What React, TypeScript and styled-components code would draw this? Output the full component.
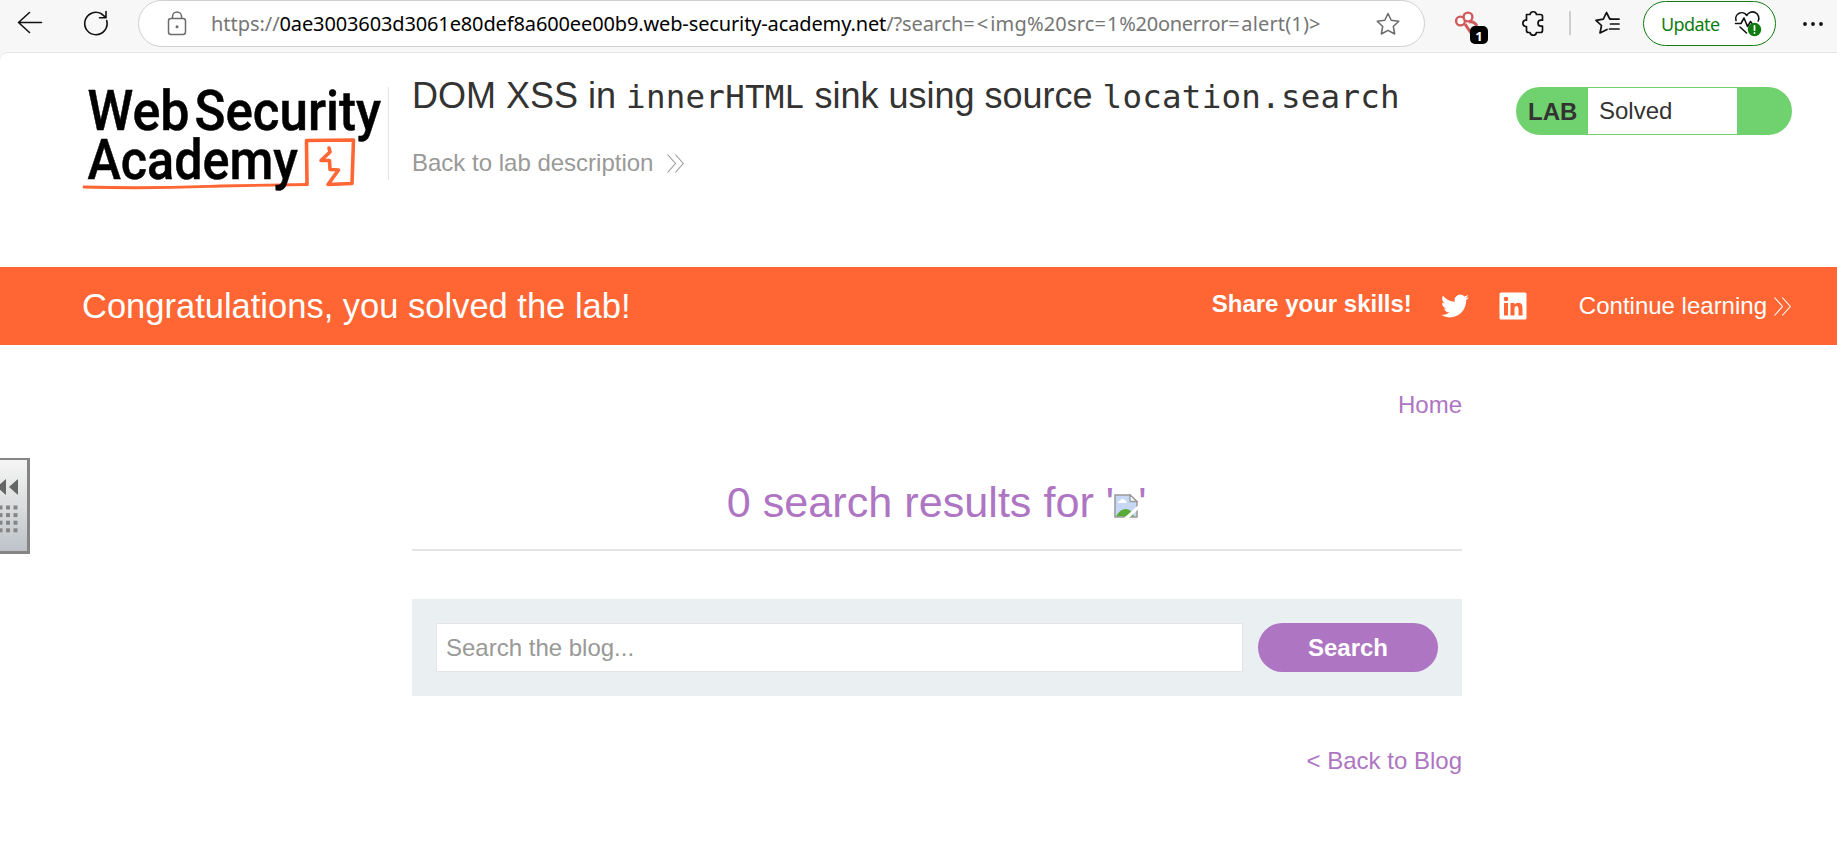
import React from "react";
import styled, { createGlobalStyle } from "styled-components";

const GlobalStyle = createGlobalStyle`
  * { box-sizing: border-box; }
  body {
    margin: 0;
    background: #fff;
    color: #333332;
    font-family: "Liberation Sans", Arial, sans-serif;
    font-size: 24px;
    line-height: 28px;
    overflow: hidden;
  }
  a { color: inherit; text-decoration: none; }
  svg { display: block; flex: none; overflow: visible; }
`;

const Page = styled.div`
  position: relative;
  width: 1837px;
  height: 864px;
  background: #f7f7f7;
`;

const Toolbar = styled.header`
  height: 52px;
  display: flex;
  align-items: flex-start;
  font-family: "Noto Sans", "Open Sans", sans-serif;
`;

const NavIcons = styled.div`
  width: 138px;
  height: 46px;
  padding-left: 16px;
  display: flex;
  align-items: center;
  gap: 38px;
`;

const AddressBar = styled.div`
  width: 1287px;
  height: 47px;
  padding: 0 24px 0 28px;
  display: flex;
  align-items: center;
  border: 1.5px solid #d0d0d0;
  border-radius: 24px;
  background: #fff;
`;

const Url = styled.div`
  flex: 1;
  margin-left: 24px;
  padding-top: 1px;
  font-size: 20px;
  line-height: 28px;
  white-space: nowrap;
  color: #767676;
`;

const UrlPart = styled.span<{ $spacing: number; $strong?: boolean }>`
  letter-spacing: ${(p) => p.$spacing}px;
  color: ${(p) => (p.$strong ? "#000" : "#767676")};
`;

const ToolbarIcons = styled.div`
  height: 46px;
  flex: 1;
  padding-left: 28px;
  display: flex;
  align-items: center;
`;

const ExtensionIcon = styled.div`
  position: relative;
  width: 34px;
  height: 46px;
`;

const ExtensionBadge = styled.span`
  position: absolute;
  left: 17px;
  top: 26px;
  width: 18px;
  height: 18px;
  border-radius: 5px;
  background: #000;
  color: #fff;
  font: 700 13px/20px "Noto Sans", sans-serif;
  text-align: center;
`;

const Spacer = styled.span<{ $w: number }>`
  flex: none;
  width: ${(p) => p.$w}px;
`;

const Separator = styled.span`
  width: 2px;
  height: 24px;
  background: #cfcfcf;
`;

const UpdateButton = styled.button`
  width: 133px;
  height: 45px;
  margin-top: 1px;
  padding: 0 15px 0 17px;
  display: flex;
  align-items: center;
  justify-content: space-between;
  border: 1.5px solid #107c10;
  border-radius: 23px;
  background: #fff;
  color: #107c10;
  font: 18px/24px "Noto Sans", sans-serif;
  letter-spacing: -0.6px;
`;

const Content = styled.main`
  height: 812px;
  border-top: 1px solid #e6e6e6;
  border-top-left-radius: 8px;
  background: #fff;
`;

const LabHeader = styled.section`
  height: 214px;
  padding: 34px 45px 0 82px;
  display: flex;
  align-items: flex-start;
`;

const LogoBox = styled.div`
  width: 307px;
  height: 93px;
  border-right: 1px solid #e5e5e5;
`;

const TitleBlock = styled.div`
  flex: 1;
  margin: -12px 0 0 23px;
`;

const Title = styled.h1`
  margin: 0;
  font-size: 36px;
  font-weight: 400;
  line-height: 42px;
  height: 42px;
  white-space: nowrap;
`;

const Code = styled.code`
  font-family: "DejaVu Sans Mono", monospace;
  font-size: 32.5px;
  letter-spacing: 0.25px;
  line-height: 1;
`;

const LabLink = styled.a`
  margin-top: 32px;
  display: flex;
  align-items: center;
  gap: 14px;
  color: #999997;
`;

const LabStatus = styled.div`
  width: 276px;
  height: 48px;
  padding: 1px 55px 1px 0;
  display: flex;
  border-radius: 24px;
  background: #70d16f;
  line-height: 46px;
`;

const LabLabel = styled.strong`
  width: 72px;
  padding: 1px 0 0 12px;
`;

const LabState = styled.span`
  flex: 1;
  padding-left: 11px;
  background: #fff;
`;

const Banner = styled.section`
  height: 78px;
  padding: 0 46px 0 82px;
  display: flex;
  align-items: center;
  background: #ff6633;
  color: #fff;
`;

const BannerTitle = styled.h2`
  flex: 1;
  margin: 0;
  font-size: 34.5px;
  font-weight: 400;
  line-height: 42px;
`;

const Share = styled.strong`
  margin: 0 29px 4px 0;
`;

const Continue = styled.a`
  margin-left: 52px;
  display: flex;
  align-items: center;
  gap: 7px;
`;

const Blog = styled.section`
  width: 1050px;
  margin-left: 412px;
  display: flex;
  flex-direction: column;
  color: #ae75c3;
`;

const HomeLink = styled.a`
  margin-top: 46px;
  align-self: flex-end;
`;

const Results = styled.h2`
  height: 102px;
  margin: 30px 0 0;
  padding: 28px 1px 0 0;
  display: flex;
  justify-content: center;
  border-bottom: 2px solid #e5e5e5;
  font-size: 43.2px;
  font-weight: 400;
  line-height: 50px;
  white-space: pre;
`;

const BrokenImage = styled.svg`
  margin-top: 17px;
`;

const SearchForm = styled.form`
  height: 97px;
  margin-top: 48px;
  padding: 24px;
  display: flex;
  gap: 15px;
  background: #eaeff2;
`;

const SearchInput = styled.input`
  flex: 1;
  min-width: 0;
  padding: 0 9px;
  border: 1px solid #e5e5e5;
  background: #fff;
  font: 24px/28px "Liberation Sans", Arial, sans-serif;
  outline: none;
  &::placeholder { color: #999997; opacity: 1; }
`;

const SearchButton = styled.button`
  width: 180px;
  padding: 0;
  border: 0;
  border-radius: 25px;
  background: #ae75c3;
  color: #fff;
  font: 700 24px/28px "Liberation Sans", Arial, sans-serif;
`;

const BackLink = styled.a`
  margin-top: 51px;
  align-self: flex-end;
`;

const SideTab = styled.aside`
  position: absolute;
  left: 0;
  top: 458px;
  width: 30px;
  height: 96px;
  border: solid #858585;
  border-width: 2px 3px 3px 0;
  background: linear-gradient(#f5f5f5, #d9dbdc 55%, #bcc2c8);
  overflow: hidden;
`;

const Chevrons = ({ w = 17 }: { w?: number }) => (
  <svg width={w} height="19" viewBox="0 0 17 19" fill="none" stroke="currentColor" strokeWidth="1.1">
    <path d="M.5 .5 8.5 9.5.5 18.5M8.3 .5l8 9-8 9" />
  </svg>
);

const Logo = () => (
  <svg width="306" height="110" viewBox="82 87 306 110" fontFamily="Roboto, sans-serif" fontSize="56" fontWeight="500" fill="#000">
    <g fill="none" stroke="#ff6633" strokeLinejoin="round" strokeLinecap="round">
      <path d="M307 184.500 306.500 140.500 353.500 140 352 183.500 328 184.500 338.500 170 330 169.500 329.500 160.500 321 160.500 330 152 329 148" strokeWidth="3.6" />
      <path d="M84 187 C150 189 190 187 220 186 L307 184.500" strokeWidth="2.8" />
    </g>
    <g stroke="#000" strokeWidth="0.5">
      <text x="87.500" y="130" textLength="102" lengthAdjust="spacingAndGlyphs">Web</text>
      <text x="194.500" y="130" textLength="186.500" lengthAdjust="spacingAndGlyphs">Security</text>
      <text x="87.500" y="178.500" textLength="210.500" lengthAdjust="spacingAndGlyphs">Academy</text>
    </g>
  </svg>
);

const starPath = "M12 1.500 15.200 8.300 22.800 9.300 17.300 14.500 18.700 22 12 18.400 5.300 22 6.700 14.500 1.200 9.300 8.800 8.300Z";

export default function App() {
  return (
    <>
      <GlobalStyle />
      <Page>
        <Toolbar>
          <NavIcons>
            <svg width="28" height="24" fill="none" stroke="#111" strokeWidth="1.6" strokeLinecap="round" strokeLinejoin="round">
              <path d="M13.500 1.500 2.500 11.500 13.500 21.500M2.500 11.500H25.500" />
            </svg>
            <svg width="28" height="26" fill="none" stroke="#111" strokeWidth="1.6" strokeLinecap="round" strokeLinejoin="round">
              <path d="M24.700 10.500A11.200 11.200 0 1 1 19.500 3.800L24 7.700M24 1.500V7.700H17.500" />
            </svg>
          </NavIcons>
          <AddressBar>
            <svg width="20" height="26" fill="none" stroke="#6b6b6b" strokeWidth="1.5">
              <rect x="1.500" y="7.500" width="17" height="16" rx="2.500" />
              <path d="M5.500 7.500V5.500a4.500 4.500 0 0 1 9 0v2" />
              <circle cx="10" cy="15.800" r="1.500" fill="#6b6b6b" stroke="none" />
            </svg>
            <Url>
              <UrlPart $spacing={-0.05}>https://</UrlPart>
              <UrlPart $spacing={-0.13} $strong>0ae3003603d3061e80def8a600ee00b9.web-security-academy.net</UrlPart>
              <UrlPart $spacing={-0.1}>/?search</UrlPart>
              <UrlPart $spacing={2}>=&lt;</UrlPart>
              <UrlPart $spacing={0.18}>img%20src</UrlPart>
              <UrlPart $spacing={0.9}>=1</UrlPart>
              <UrlPart $spacing={-0.28}>%20onerror</UrlPart>
              <UrlPart $spacing={1.7}>=</UrlPart>
              <UrlPart $spacing={0.15}>alert(1)&gt;</UrlPart>
            </Url>
            <svg width="24" height="24" fill="none" stroke="#6b6b6b" strokeWidth="1.500" strokeLinejoin="round">
              <path d={starPath} />
            </svg>
          </AddressBar>
          <ToolbarIcons>
            <ExtensionIcon>
              <svg width="28" height="46" fill="#fff" stroke="#d05a5a" strokeWidth="2.400">
                <path d="M12 24 18 33M16 22q5-1 8 4" fill="none" strokeWidth="3" />
                <circle cx="7.500" cy="21" r="4.400" />
                <circle cx="15" cy="17" r="4.400" />
              </svg>
              <ExtensionBadge>1</ExtensionBadge>
            </ExtensionIcon>
            <Spacer $w={34} />
            <svg width="25" height="26" viewBox="0 0 25 26" fill="none" stroke="#111" strokeWidth="1.700" strokeLinejoin="round">
              <path d="M5.500 4.500H9A3.300 3.300 0 0 1 15.500 4.500H19.500Q21.500 4.500 21.500 6.500V10.200H20A3 3 0 0 0 20 16.200H21.500V20.500Q21.500 22.500 19.500 22.500H15.500A3.300 3.300 0 0 1 9 22.500H7.500Q5.500 22.500 5.500 20.500V16.500H4.500A3.200 3.200 0 0 1 4.500 10.200H5.500Z" />
            </svg>
            <Spacer $w={23} />
            <Separator />
            <Spacer $w={24} />
            <svg width="26" height="24" fill="none" stroke="#111" strokeWidth="1.700" strokeLinejoin="round" strokeLinecap="round">
              <path d="M16 7.800 14.500 7.500 11.500 1.500 8.300 8.200 1 9.300 6.500 14.500 5 22 12 18.500M15 8.200H24M15.500 13H24M14.500 18H24" />
            </svg>
            <Spacer $w={22} />
            <UpdateButton>
              Update
              <svg width="26" height="26" fill="none" stroke="#111" strokeWidth="1.600" strokeLinejoin="round" strokeLinecap="round">
                <path d="M2 9.500A6 6 0 0 1 12.800 4.500 6 6 0 0 1 24.200 10M1.500 12.500H7L10 7 13.500 15.500 16.500 10.500 18 12.500M6 16 12.500 22" />
                <circle cx="20.500" cy="18.500" r="6.700" fill="#107c10" stroke="none" />
                <path d="M20.500 15V19.200M20.500 21.900V22" stroke="#fff" strokeWidth="1.800" />
              </svg>
            </UpdateButton>
            <Spacer $w={26} />
            <svg width="22" height="6" fill="#111">
              <circle cx="3" cy="4" r="1.900" />
              <circle cx="11" cy="4" r="1.900" />
              <circle cx="19" cy="4" r="1.900" />
            </svg>
          </ToolbarIcons>
        </Toolbar>

        <Content>
          <LabHeader>
            <LogoBox><Logo /></LogoBox>
            <TitleBlock>
              <Title>DOM XSS in <Code>innerHTML</Code> sink using source <Code>location.search</Code></Title>
              <LabLink href="#">Back to lab description <Chevrons /></LabLink>
            </TitleBlock>
            <LabStatus>
              <LabLabel>LAB</LabLabel>
              <LabState>Solved</LabState>
            </LabStatus>
          </LabHeader>

          <Banner>
            <BannerTitle>Congratulations, you solved the lab!</BannerTitle>
            <Share>Share your skills!</Share>
            <svg width="28" height="28" viewBox="0 0 24 24" fill="#fff">
              <path d="M23.950 4.570a10 10 0 0 1-2.820.770 4.960 4.960 0 0 0 2.160-2.720c-.950.550-2 .950-3.130 1.180a4.920 4.920 0 0 0-8.380 4.480C7.690 8.090 4.070 6.130 1.640 3.160a4.820 4.820 0 0 0-.670 2.480c0 1.710.870 3.210 2.190 4.100a4.900 4.900 0 0 1-2.230-.620v.060a4.920 4.920 0 0 0 3.950 4.830 5 5 0 0 1-2.210.080 4.940 4.940 0 0 0 4.600 3.420A9.870 9.870 0 0 1 0 19.540a13.990 13.990 0 0 0 7.550 2.210c9.050 0 14-7.500 14-13.980 0-.210 0-.420-.020-.630a9.940 9.940 0 0 0 2.460-2.550z" />
            </svg>
            <Spacer $w={30} />
            <svg width="28" height="28" fill="#fff">
              <path fillRule="evenodd" d="M2 .5H26Q27.500 .5 27.500 2V26Q27.500 27.500 26 27.500H2Q.5 27.500 .5 26V2Q.5 .5 2 .5ZM5 11H9V23.500H5ZM7 4.700A2.300 2.300 0 1 0 7 9.300 2.300 2.300 0 1 0 7 4.700ZM11.500 11H15.400V12.700Q16.800 10.700 19.300 10.700 23.500 10.700 23.500 16V23.500H19.500V16.700Q19.500 14 17.600 14 15.500 14 15.500 16.700V23.500H11.500Z" />
            </svg>
            <Continue href="#">Continue learning <Chevrons /></Continue>
          </Banner>

          <Blog>
            <HomeLink href="#">Home</HomeLink>
            <Results>
              {"0 search results for '"}
              <BrokenImage width="24" height="24" viewBox="0 0 24 24">
                <path d="M1 1H16L23 7.500V23H1Z" fill="#c6d8f5" stroke="#999" strokeWidth="1.500" />
                <path d="M4 9Q4 6.500 6.500 6.500 7.500 3.500 10 5.500 12.500 6 12.500 9Z" fill="#fff" />
                <path d="M2 22.300Q6 15 12 15 17 15 20 22.300Z" fill="#5aaa36" />
                <path d="M16 1V7.500H23Z" fill="#fff" stroke="#999" strokeWidth="1.300" />
                <path d="M24.500 11V15L14.500 24.500H9.500Z" fill="#fff" />
              </BrokenImage>
              {"'"}
            </Results>
            <SearchForm onSubmit={(e) => e.preventDefault()}>
              <SearchInput placeholder="Search the blog..." />
              <SearchButton>Search</SearchButton>
            </SearchForm>
            <BackLink href="#">&lt; Back to Blog</BackLink>
          </Blog>
        </Content>

        <SideTab>
          <svg width="27" height="91" fill="#666">
            <path d="M18 19V35L9 27ZM6 19V35L-3 27Z" />
            {[0, 1, 2, 3].map((r) =>
              [0, 1, 2].map((c) => (
                <rect key={`${r}-${c}`} x={-1.500 + c * 7.500} y={45.500 + r * 7.600} width="4" height="4" fill="#858585" />
              ))
            )}
          </svg>
        </SideTab>
      </Page>
    </>
  );
}
